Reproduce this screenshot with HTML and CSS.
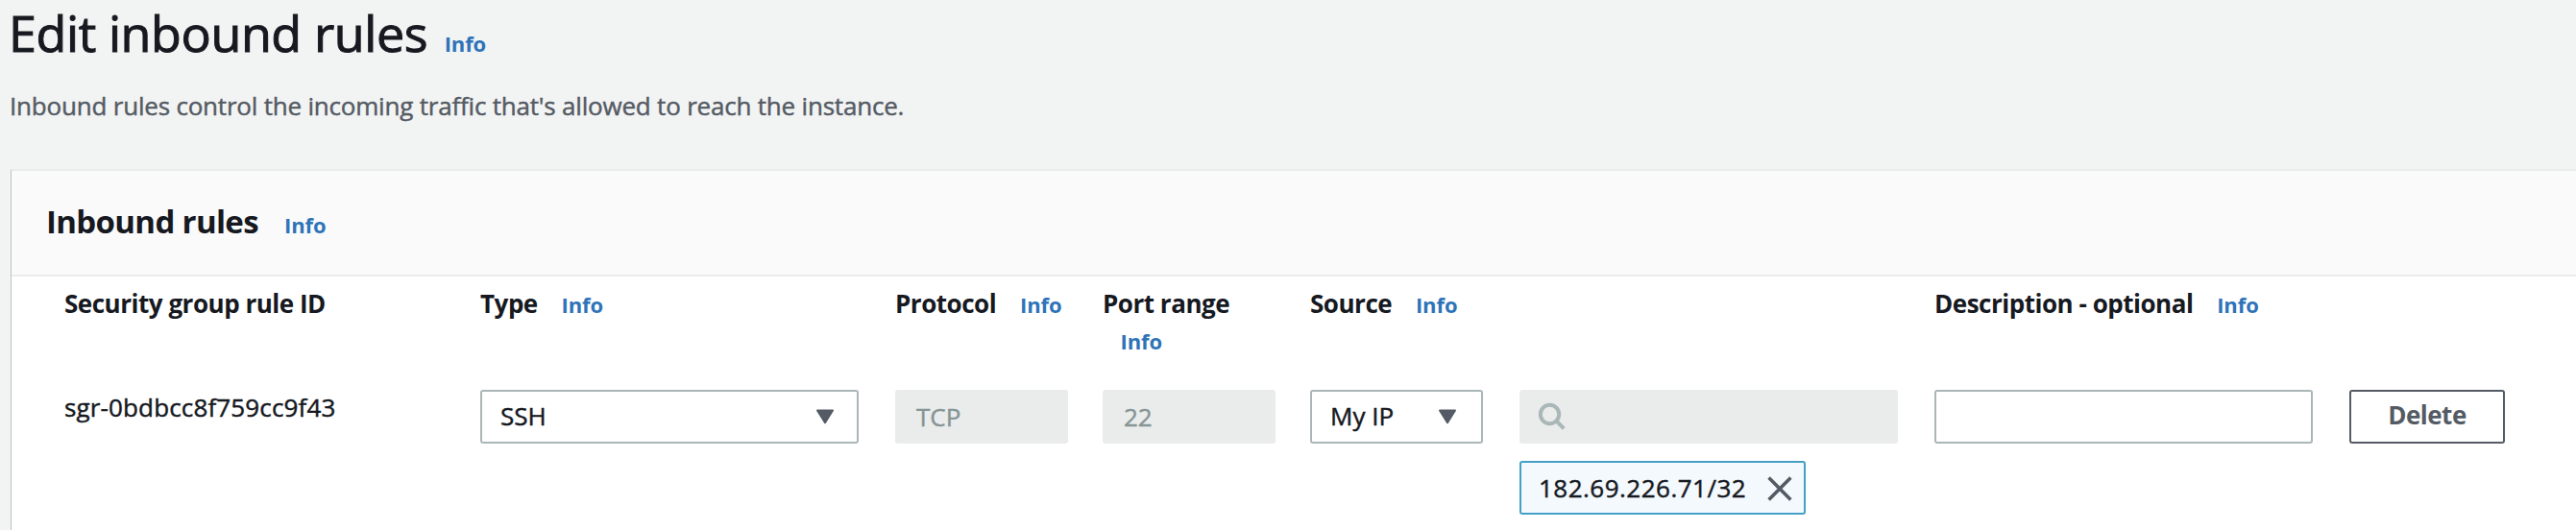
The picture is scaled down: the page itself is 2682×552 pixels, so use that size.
FILE: index.html
```html
<!DOCTYPE html>
<html lang="en">
<head>
<meta charset="utf-8">
<title>Edit inbound rules</title>
<link rel="stylesheet" href="styles.css">
</head>
<body>
<main class="page">
  <header class="page-header">
    <h1 class="page-title">Edit inbound rules</h1>
    <a class="info">Info</a>
  </header>
  <p class="page-description">Inbound rules control the incoming traffic that's allowed to reach the instance.</p>
  <section class="panel">
    <div class="panel-header">
      <h2 class="panel-title">Inbound rules</h2>
      <a class="info">Info</a>
    </div>
    <div class="rules">
      <div class="label label-id">Security group rule ID</div>
      <div class="label">Type <a class="info">Info</a></div>
      <div class="label">Protocol <a class="info">Info</a></div>
      <div class="label">Port range <a class="info">Info</a></div>
      <div class="label label-source">Source <a class="info">Info</a></div>
      <div class="label">Description - optional <a class="info">Info</a></div>
      <div class="label"></div>

      <div class="rule-id">sgr-0bdbcc8f759cc9f43</div>
      <div class="field select">
        <span>SSH</span>
        <svg class="caret" viewBox="0 0 20 16"><path d="M2 1.5H18L10 14.2Z"/></svg>
      </div>
      <div class="field disabled">TCP</div>
      <div class="field disabled">22</div>
      <div class="field select select-source">
        <span>My IP</span>
        <svg class="caret" viewBox="0 0 20 16"><path d="M2 1.5H18L10 14.2Z"/></svg>
      </div>
      <div class="source-value">
        <div class="field disabled search">
          <svg class="search-icon" viewBox="0 0 30 30"><circle cx="12.5" cy="12.5" r="9.7"/><path d="M19 19L27.3 27.3"/></svg>
        </div>
        <div class="token">
          <span>182.69.226.71/32</span>
          <svg class="close-icon" viewBox="0 0 26 26"><path d="M1.6 1.6L24.4 24.4M24.4 1.6L1.6 24.4"/></svg>
        </div>
      </div>
      <div class="field"></div>
      <button class="delete" type="button">Delete</button>
    </div>
  </section>
</main>
</body>
</html>
```
FILE: styles.css
```css
* {
  box-sizing: border-box;
}

body {
  margin: 0;
  height: 552px;
  overflow: hidden;
  background: #f2f3f3;
  color: #16191f;
  font: 400 26px/40px "Open Sans", "Noto Sans", sans-serif;
  -webkit-text-stroke: 0.45px currentColor;
}

.page {
  display: flex;
  flex-direction: column;
  height: 552px;
}

.page-header {
  display: flex;
  align-items: baseline;
  gap: 17.5px;
  padding-left: 9px;
  height: 68px;
}

.page-title {
  margin: 0;
  font-size: 52px;
  line-height: 68px;
  font-weight: 400;
  letter-spacing: -0.4px;
  -webkit-text-stroke-width: 1px;
}

.info {
  color: #2e73b8;
  font-size: 22px;
  font-weight: 700;
  line-height: 1;
  letter-spacing: -0.1px;
  -webkit-text-stroke-width: 0;
}

.page-description {
  margin: 22px 0 46px 10px;
  color: #545b64;
  letter-spacing: -0.2px;
}

.panel {
  flex: 1;
  margin-left: 11px;
  border-left: 1px solid #bcc3c4;
  border-top: 2px solid #eaebeb;
  background: #fff;
}

.panel-header {
  display: flex;
  align-items: baseline;
  gap: 27px;
  height: 110px;
  padding: 33px 36px 0;
  border-bottom: 2px solid #eaebeb;
  background: #fafafa;
}

.panel-title {
  margin: 0;
  font-size: 33px;
  line-height: 40px;
  letter-spacing: -0.65px;
  -webkit-text-stroke-width: 0;
}

.rules {
  display: grid;
  grid-template-columns: 432px 432px 216px 216px 218px 432px 432px 162px;
  grid-template-rows: 109px auto;
  padding: 9px 0 0 56px;
}

.label {
  font-weight: 700;
  line-height: 38px;
  letter-spacing: -0.48px;
  padding-right: 36px;
  -webkit-text-stroke-width: 0;
}

.label-id {
  margin-left: -1px;
}

.label .info {
  margin-left: 18.5px;
}

.label-source {
  grid-column: span 2;
}

.rule-id {
  margin: -2px 0 0 -1px;
  letter-spacing: 0.14px;
}

.field {
  display: flex;
  align-items: center;
  height: 56px;
  margin-right: 38px;
  padding: 0 20px;
  border: 2px solid #aab7b8;
  border-radius: 3px;
  background: #fff;
}

.select {
  justify-content: space-between;
  padding: 0 23px 3px 19px;
}

.select-source {
  padding-right: 25px;
}

.disabled {
  margin-right: 36px;
  border-color: #eaeceb;
  background: #eaeceb;
  color: #879596;
}

.caret {
  width: 20px;
  height: 16px;
  margin-top: 2px;
  fill: #545b64;
  stroke: #545b64;
  stroke-width: 2;
  stroke-linejoin: round;
}

.source-value {
  display: flex;
  flex-direction: column;
  align-items: flex-start;
  gap: 18px;
}

.search {
  width: 394px;
  margin-right: 0;
  padding-left: 16.5px;
}

.search-icon {
  width: 30px;
  height: 30px;
  fill: none;
  stroke: #aab7b8;
  stroke-width: 4;
}

.token {
  display: flex;
  align-items: center;
  justify-content: space-between;
  width: 298px;
  height: 56px;
  padding: 0 12px 0 18px;
  border: 2px solid #44a0c6;
  border-radius: 3px;
  background: #f3f9fd;
  letter-spacing: 0.48px;
}

.close-icon {
  width: 26px;
  height: 26px;
  margin-top: 2px;
  fill: none;
  stroke: #545b64;
  stroke-width: 3.6;
}

.delete {
  height: 56px;
  padding: 0 0 4px;
  border: 2px solid #545b64;
  border-radius: 3px;
  background: #fff;
  color: #545b64;
  font: 700 26px/40px "Open Sans", "Noto Sans", sans-serif;
  letter-spacing: -0.5px;
  -webkit-text-stroke-width: 0;
}
```
